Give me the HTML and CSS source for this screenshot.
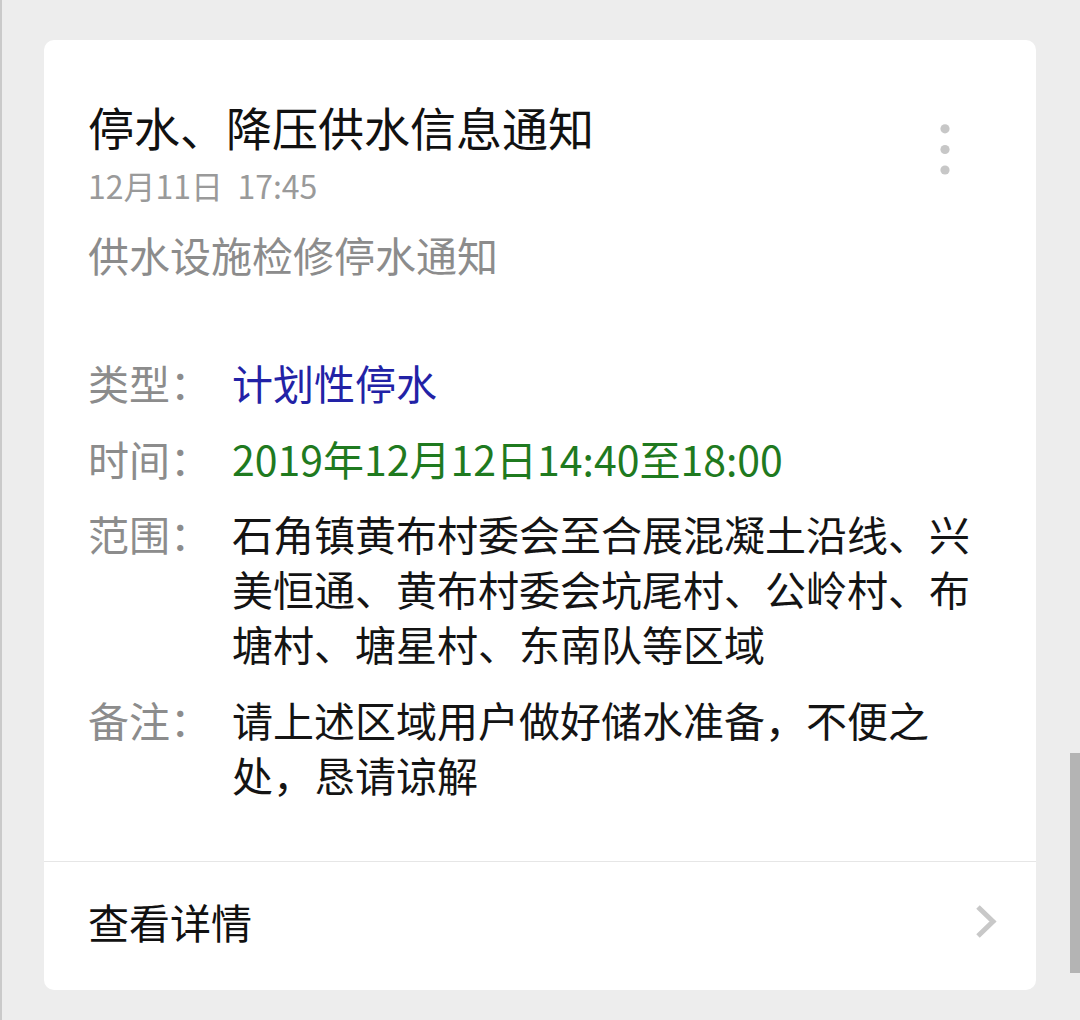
FILE: index.html
```html
<!DOCTYPE html>
<html lang="zh-CN">
<head>
<meta charset="utf-8">
<title>停水、降压供水信息通知</title>
<link rel="stylesheet" href="styles.css">
</head>
<body>
<div class="page">
  <div class="card">
    <div class="card-body">
      <div class="header">
        <div class="head-text">
          <h1 class="title">停水、降压供水信息通知</h1>
          <div class="date">12月11日&nbsp;&nbsp;17:45</div>
        </div>
        <svg class="more" width="10" height="52" viewBox="0 0 10 52" aria-hidden="true">
          <circle cx="5" cy="4.8" r="4.6" fill="#c7c7c7"/>
          <circle cx="5" cy="25.5" r="4.6" fill="#c7c7c7"/>
          <circle cx="5" cy="46" r="4.6" fill="#c7c7c7"/>
        </svg>
      </div>
      <div class="subtitle">供水设施检修停水通知</div>
      <div class="fields">
        <div class="field">
          <div class="label">类型：</div>
          <div class="value value-blue">计划性停水</div>
        </div>
        <div class="field">
          <div class="label">时间：</div>
          <div class="value value-green">2019年12月12日14:40至18:00</div>
        </div>
        <div class="field">
          <div class="label">范围：</div>
          <div class="value">石角镇黄布村委会至合展混凝土沿线、兴美恒通、黄布村委会坑尾村、公岭村、布塘村、塘星村、东南队等区域</div>
        </div>
        <div class="field">
          <div class="label">备注：</div>
          <div class="value">请上述区域用户做好储水准备，不便之处，恳请谅解</div>
        </div>
      </div>
    </div>
    <div class="footer">
      <span class="footer-text">查看详情</span>
      <svg class="chevron" width="24" height="36" viewBox="0 0 24 36" aria-hidden="true">
        <polyline points="4,3 19,17.5 4,32" fill="none" stroke="#c8c8c8" stroke-width="5" stroke-linecap="butt" stroke-linejoin="miter"/>
      </svg>
    </div>
  </div>
</div>
<div class="scrollbar"></div>
</body>
</html>
```

FILE: styles.css
```css
html, body {
  margin: 0;
  padding: 0;
}

body {
  background: #ededed;
  font-family: "Noto Sans CJK SC", "Noto Sans", sans-serif;
  color: #111111;
  width: 1080px;
  height: 1020px;
  overflow: hidden;
  box-sizing: border-box;
  border-left: 2px solid #cacaca;
}

.page {
  padding: 40px 44px 0 42px;
}

.card {
  background: #ffffff;
  border-radius: 10px;
  width: 992px;
  overflow: hidden;
}

.card-body {
  padding: 58px 44px 59px 44px;
}

.header {
  display: flex;
  justify-content: space-between;
  align-items: flex-start;
}

.title {
  margin: 0;
  font-size: 46px;
  font-weight: normal;
  line-height: 56px;
  color: #111111;
}

.date {
  margin-top: 11px;
  font-size: 32px;
  line-height: 40px;
  color: #9a9a9a;
}

.more {
  margin-top: 26px;
  margin-right: 42px;
  flex: none;
}

.subtitle {
  margin-top: 21px;
  font-size: 41px;
  line-height: 56px;
  color: #8c8c8c;
}

.fields {
  margin-top: 73px;
  display: flex;
  flex-direction: column;
  gap: 20.5px;
}

.field {
  display: flex;
  font-size: 41px;
  line-height: 55px;
}

.label {
  flex: none;
  width: 144px;
  color: #8c8c8c;
}

.value {
  flex: 1;
  color: #141414;
}

.value-blue {
  color: #2222a6;
}

.value-green {
  color: #1f7a1f;
}

.footer {
  border-top: 1px solid #e6e6e6;
  display: flex;
  justify-content: space-between;
  align-items: center;
  padding: 32px 38px 41px 44px;
}

.footer-text {
  font-size: 41px;
  line-height: 55px;
  color: #111111;
}

.chevron {
  flex: none;
  margin-top: 2px;
}

.scrollbar {
  position: absolute;
  left: 1070px;
  top: 753px;
  width: 10px;
  height: 220px;
  background: #b4b4b4;
}
```
